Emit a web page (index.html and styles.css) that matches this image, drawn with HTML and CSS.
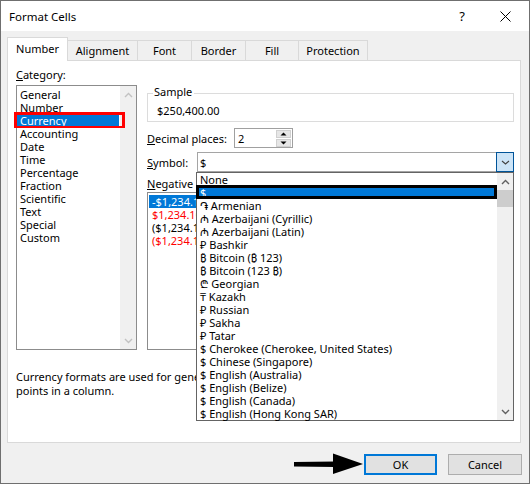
FILE: index.html
```html
<!DOCTYPE html>
<html lang="en">
<head>
<meta charset="utf-8">
<title>Format Cells</title>
<link rel="stylesheet" href="styles.css">
</head>
<body>
<div class="window">
  <div class="titlebar">
    <span class="title">Format Cells</span>
    <div class="tb-buttons">
      <span class="tb-btn help">?</span>
      <span class="tb-btn close"><svg width="11" height="11" viewBox="0 0 11 11"><path d="M0.5 0.5L10.5 10.5M10.5 0.5L0.5 10.5" stroke="#000" stroke-width="1" fill="none"/></svg></span>
    </div>
  </div>

  <div class="tabs">
    <div class="tab active w-number">Number</div>
    <div class="tab w-alignment">Alignment</div>
    <div class="tab w-font">Font</div>
    <div class="tab w-border">Border</div>
    <div class="tab w-fill">Fill</div>
    <div class="tab w-protection">Protection</div>
  </div>

  <div class="panel">
    <div class="cols">
      <div class="left">
        <div class="label"><u>C</u>ategory:</div>
        <div class="listbox cat">
          <div class="items">
            <div class="item">General</div>
            <div class="item">Number</div>
            <div class="item selected">Currency</div>
            <div class="item">Accounting</div>
            <div class="item">Date</div>
            <div class="item">Time</div>
            <div class="item">Percentage</div>
            <div class="item">Fraction</div>
            <div class="item">Scientific</div>
            <div class="item">Text</div>
            <div class="item">Special</div>
            <div class="item">Custom</div>
          </div>
          <div class="vscroll">
            <div class="sb-btn"><svg width="9" height="6" viewBox="0 0 9 6"><polyline points="1,5 4.5,1.5 8,5" class="chev-disabled"/></svg></div>
            <div class="sb-track"></div>
            <div class="sb-btn"><svg width="9" height="6" viewBox="0 0 9 6"><polyline points="1,1 4.5,4.5 8,1" class="chev-disabled"/></svg></div>
          </div>
          <div class="red-mark"></div>
        </div>
      </div>

      <div class="right">
        <div class="sample">
          <span class="sample-legend">Sample</span>
          <div class="sample-value">$250,400.00</div>
        </div>

        <div class="row decimal-row">
          <span class="row-label dec-label"><u>D</u>ecimal places:</span>
          <div class="spin">
            <span class="spin-value">2</span>
            <div class="spin-btns">
              <div class="spin-btn"><svg width="7" height="4" viewBox="0 0 7 4"><polygon points="0.5,3.5 3.5,0.5 6.5,3.5" fill="#000"/></svg></div>
              <div class="spin-btn"><svg width="7" height="4" viewBox="0 0 7 4"><polygon points="0.5,0.5 3.5,3.5 6.5,0.5" fill="#000"/></svg></div>
            </div>
          </div>
        </div>

        <div class="row symbol-row">
          <span class="row-label sym-label"><u>S</u>ymbol:</span>
          <div class="combo">
            <span class="combo-value">$</span>
            <div class="combo-btn"><svg width="9" height="5" viewBox="0 0 9 5"><polyline points="1,1 4.5,4 8,1" class="chev-combo"/></svg></div>

            <div class="dropdown">
              <div class="dd-items">
                <div class="dd-item">None</div>
                <div class="dd-item dd-selected">$</div>
                <div class="dd-item">֏ Armenian</div>
                <div class="dd-item">₼ Azerbaijani (Cyrillic)</div>
                <div class="dd-item">₼ Azerbaijani (Latin)</div>
                <div class="dd-item">₽ Bashkir</div>
                <div class="dd-item">₿ Bitcoin (₿ 123)</div>
                <div class="dd-item">₿ Bitcoin (123 ₿)</div>
                <div class="dd-item">₾ Georgian</div>
                <div class="dd-item">₸ Kazakh</div>
                <div class="dd-item">₽ Russian</div>
                <div class="dd-item">₽ Sakha</div>
                <div class="dd-item">₽ Tatar</div>
                <div class="dd-item">$ Cherokee (Cherokee, United States)</div>
                <div class="dd-item">$ Chinese (Singapore)</div>
                <div class="dd-item">$ English (Australia)</div>
                <div class="dd-item">$ English (Belize)</div>
                <div class="dd-item">$ English (Canada)</div>
                <div class="dd-item">$ English (Hong Kong SAR)</div>
              </div>
              <div class="vscroll dd-scroll">
                <div class="sb-btn"><svg width="9" height="6" viewBox="0 0 9 6"><polyline points="1,5 4.5,1.5 8,5" class="chev"/></svg></div>
                <div class="sb-thumb"></div>
                <div class="sb-track"></div>
                <div class="sb-btn"><svg width="9" height="6" viewBox="0 0 9 6"><polyline points="1,1 4.5,4.5 8,1" class="chev"/></svg></div>
              </div>
            </div>
          </div>
        </div>

        <div class="label neg-label"><u>N</u>egative numbers:</div>
        <div class="listbox neg">
          <div class="items">
            <div class="item selected">-$1,234.10</div>
            <div class="item red">$1,234.10</div>
            <div class="item">($1,234.10)</div>
            <div class="item red">($1,234.10)</div>
          </div>
        </div>
      </div>
    </div>

    <p class="help-text">Currency formats are used for general monetary values.  Use Accounting formats to align decimal<br>points in a column.</p>
  </div>

  <div class="footer">
    <svg class="arrow" width="70" height="26" viewBox="0 0 70 26">
      <path d="M1 11 L42 10.5 L42 16 L1 15.5 Z" fill="#000"/>
      <polygon points="40,2.5 70,13 40,23" fill="#000"/>
    </svg>
    <button class="btn default">OK</button>
    <button class="btn">Cancel</button>
  </div>
</div>
</body>
</html>
```

FILE: styles.css
```css
* { box-sizing: border-box; }

html, body {
  margin: 0;
  padding: 0;
}

body {
  font-family: "Noto Sans", "DejaVu Sans", sans-serif;
  font-size: 11px;
  color: #000;
  background: #fff;
}

.window {
  width: 530px;
  height: 484px;
  border: 1px solid #6f6f6f;
  background: #f0f0f0;
  display: flex;
  flex-direction: column;
  overflow: hidden;
}

/* title bar */
.titlebar {
  flex: none;
  height: 30px;
  background: #fff;
  display: flex;
  align-items: center;
  padding-left: 8px;
  padding-right: 1px;
}

.title {
  font-size: 11.5px;
}

.tb-buttons {
  margin-left: auto;
  display: flex;
  height: 100%;
}

.tb-btn {
  display: flex;
  align-items: center;
  justify-content: center;
  height: 100%;
}

.help {
  width: 40px;
  font-size: 13px;
}

.close {
  width: 46px;
}

/* tabs */
.tabs {
  flex: none;
  display: flex;
  align-items: flex-end;
  height: 24px;
  margin-top: 6px;
  margin-bottom: -1px;
  padding-left: 6px;
  position: relative;
  z-index: 1;
}

.tab {
  height: 20px;
  margin-bottom: 1px;
  margin-left: -1px;
  border: 1px solid #d9d9d9;
  border-bottom: none;
  background: #f0f0f0;
  display: flex;
  align-items: center;
  justify-content: center;
}

.tab:first-child { margin-left: 0; }

.tab.active {
  height: 24px;
  margin-bottom: 0;
  background: #fff;
  padding-bottom: 2px;
}

.w-number { width: 61px; }
.w-alignment { width: 71px; }
.w-font { width: 55px; }
.w-border { width: 55px; }
.w-fill { width: 54px; }
.w-protection { width: 70px; }

/* panel */
.panel {
  flex: none;
  height: 383px;
  margin: 0 8px 0 6px;
  background: #fff;
  border: 1px solid #d9d9d9;
  padding: 7px 6px 0 8px;
}

.cols {
  display: grid;
  grid-template-columns: 121px 367px;
  column-gap: 10px;
}

.label {
  line-height: 14px;
  height: 14px;
  white-space: nowrap;
}

.listbox {
  position: relative;
  border: 1px solid #8c8c8c;
  background: #fff;
  display: flex;
}

.listbox.cat {
  margin-top: 3px;
  height: 265px;
}

.items {
  flex: 1;
  padding-top: 2px;
  min-width: 0;
}

.item {
  height: 13px;
  line-height: 13px;
  padding-left: 3px;
  white-space: nowrap;
}

.item.selected {
  background: #0078d7;
  color: #fff;
}

.item.red { color: #ff0000; }

.cat .item.selected { margin-right: 1px; }

.vscroll {
  flex: none;
  width: 16px;
  background: #f0f0f0;
  display: flex;
  flex-direction: column;
}

.sb-btn {
  flex: none;
  height: 17px;
  display: flex;
  align-items: center;
  justify-content: center;
}

.sb-track { flex: 1; }

.sb-thumb {
  flex: none;
  height: 17px;
  background: #cdcdcd;
}

.chev, .chev-disabled, .chev-combo {
  fill: none;
  stroke-width: 1.4;
}

.chev { stroke: #606060; }
.chev-disabled { stroke: #c2c2c2; }
.chev-combo { stroke: #404040; stroke-width: 1.1; }

.red-mark {
  position: absolute;
  left: -3px;
  top: 26px;
  width: 111px;
  height: 16px;
  border: 3px solid #ff0000;
  border-bottom-width: 2px;
}

/* right column */
.sample {
  margin-top: 25px;
  height: 29px;
  border: 1px solid #dcdcdc;
}

.sample-legend {
  display: block;
  width: max-content;
  margin: -9px 0 0 5px;
  padding: 0 2px 0 1px;
  background: #fff;
  line-height: 14px;
}

.sample-value {
  margin: 5px 0 0 9px;
  line-height: 14px;
}

.row {
  display: flex;
  align-items: center;
  height: 20px;
}

.decimal-row { margin-top: 6px; }
.symbol-row { margin-top: 4px; position: relative; z-index: 5; }

.row-label { flex: none; white-space: nowrap; }
.dec-label { width: 87px; }
.sym-label { width: 50px; }

.spin {
  width: 59px;
  height: 20px;
  border: 1px solid #a0a0a0;
  display: flex;
  align-items: center;
}

.spin-value { padding-left: 3px; }

.spin-btns {
  margin-left: auto;
  margin-right: 1px;
  width: 15px;
  display: flex;
  flex-direction: column;
  gap: 1px;
}

.spin-btn {
  height: 8px;
  background: #e6e6e6;
  border: 1px solid #d0d0d0;
  display: flex;
  align-items: center;
  justify-content: center;
}

.combo {
  position: relative;
  width: 317px;
  height: 20px;
  border: 1px solid #a5a5a5;
  background: #fff;
  display: flex;
  align-items: center;
}

.combo-value { padding-left: 2px; }

.combo-btn {
  margin-left: auto;
  margin-right: -1px;
  width: 18px;
  height: 20px;
  border: 1px solid #005499;
  background: #cce4f7;
  display: flex;
  align-items: center;
  justify-content: center;
}

.dropdown {
  position: absolute;
  left: -2px;
  top: 19px;
  width: 318px;
  height: 249px;
  border: 1px solid #646464;
  background: #fff;
  display: flex;
}

.dd-items {
  flex: 1;
  min-width: 0;
}

.dd-item {
  height: 13px;
  line-height: 13px;
  padding-left: 3px;
  white-space: nowrap;
  position: relative;
}

.dd-selected {
  background: #0078d7;
  color: #fff;
}

.dd-selected::after {
  content: "";
  position: absolute;
  left: -1px;
  right: 0;
  top: -1px;
  bottom: 0;
  border: 3px solid #000;
}

.dd-scroll { width: 16px; }

.neg-label { margin-top: 5px; }

.listbox.neg {
  margin-top: 1px;
  height: 158px;
}

.neg .items { padding-left: 1px; }

.help-text {
  margin: 20px 0 0;
  width: 497px;
  overflow: hidden;
  line-height: 14px;
  white-space: nowrap;
}

/* footer */
.footer {
  flex: 1;
  display: flex;
  justify-content: flex-end;
  align-items: flex-start;
  padding: 11px 7px 0 0;
}

.arrow {
  margin-top: -3px;
  margin-right: 1px;
}

.btn {
  font-family: inherit;
  font-size: 11px;
  color: #000;
  height: 21px;
  width: 74px;
  margin-left: 11px;
  background: #e1e1e1;
  border: 1px solid #adadad;
  padding: 0;
}

.btn.default {
  width: 73px;
  margin-left: 0;
  border: 2px solid #0078d7;
}
```
